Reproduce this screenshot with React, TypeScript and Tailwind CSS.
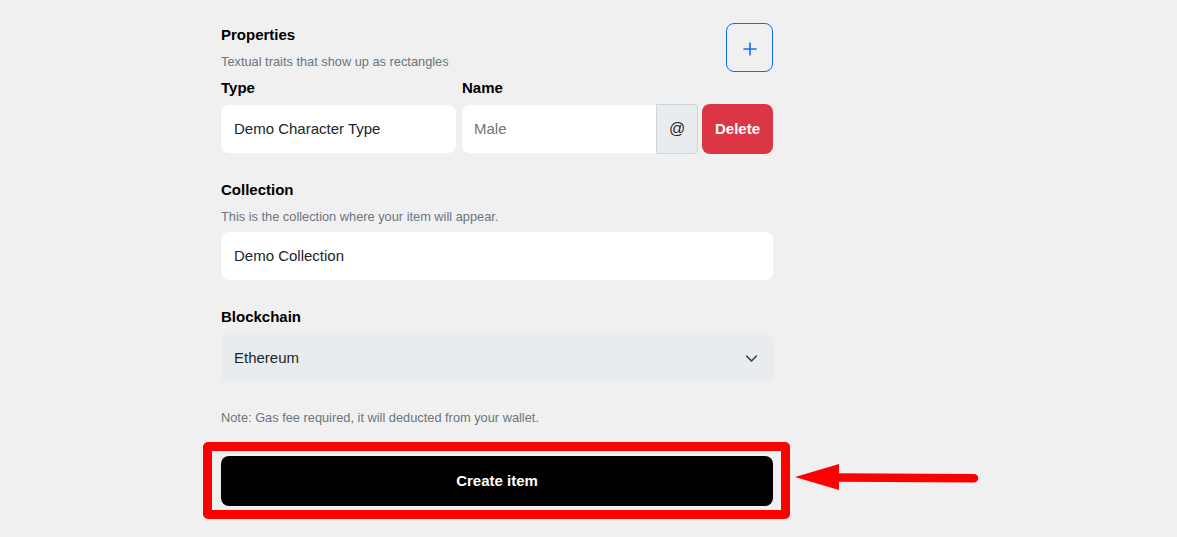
import React from "react";

export default function App() {
  return (
    <div className="min-h-screen bg-[#f0f0f0] font-['Liberation_Sans',Arial,sans-serif] text-black">
      <div className="ml-[221px] w-[552px] pt-[23px]">
        {/* Properties header */}
        <div className="flex items-start justify-between">
          <div className="pt-[3px]">
            <h3 className="text-[15px] font-bold leading-[18px]">Properties</h3>
            <p className="mt-[8px] text-[12.8px] leading-[19.2px] text-[#6c757d]">
              Textual traits that show up as rectangles
            </p>
          </div>
          <button className="flex h-[49px] w-[47px] items-center justify-center rounded-[8px] border border-[#0d6efd] text-[#0d6efd]">
            <svg width="16" height="16" viewBox="0 0 16 16" fill="none" className="mt-[2px]">
              <path d="M8 1.5v13M1.5 8h13" stroke="currentColor" strokeWidth="1.6" />
            </svg>
          </button>
        </div>

        {/* Type / Name row */}
        <div className="mt-[7px] flex items-end">
          <div className="w-[235px]">
            <label className="block text-[15px] font-bold leading-[18px]">Type</label>
            <div className="mt-[7px] flex h-[50px] items-center">
              <div className="flex h-[48px] w-full items-center rounded-[8px] bg-white px-[13px] text-[15px] text-[#212529]">
                Demo Character Type
              </div>
            </div>
          </div>
          <div className="ml-[6px] w-[236px]">
            <label className="block text-[15px] font-bold leading-[18px]">Name</label>
            <div className="mt-[7px] flex h-[50px] items-center">
              <div className="flex h-[48px] flex-1 items-center rounded-l-[8px] bg-white px-[12px] text-[15px] text-[#6c757d]">
                Male
              </div>
              <div className="flex h-[50px] w-[42px] items-center justify-center rounded-r-[4px] border border-[#ced4da] bg-[#e9ecef] text-[16px] text-[#212529]">
                @
              </div>
            </div>
          </div>
          <button className="ml-[4px] h-[50px] w-[71px] rounded-[8px] bg-[#dc3545] text-[15px] font-bold text-white">
            Delete
          </button>
        </div>

        {/* Collection */}
        <label className="mt-[27px] block text-[15px] font-bold leading-[18px]">Collection</label>
        <p className="mt-[8px] text-[12.8px] leading-[19.2px] text-[#6c757d]">
          This is the collection where your item will appear.
        </p>
        <div className="mt-[6px] flex h-[48px] items-center rounded-[8px] bg-white px-[13px] text-[15px] text-[#212529]">
          Demo Collection
        </div>

        {/* Blockchain */}
        <label className="mt-[28px] block text-[15px] font-bold leading-[18px]">Blockchain</label>
        <div className="mt-[7px] flex h-[50px] items-center justify-between rounded-[8px] bg-[#e9ecef] pl-[13px] pr-[15px] text-[15px] text-[#212529]">
          <span>Ethereum</span>
          <svg width="13" height="13" viewBox="0 0 16 16" fill="none" className="mt-[1px]">
            <path d="M2 5l6 6 6-6" stroke="#343a40" strokeWidth="1.9" strokeLinecap="round" strokeLinejoin="round" />
          </svg>
        </div>

        <p className="mt-[25px] text-[12.8px] leading-[19.2px] text-[#6c757d]">
          Note: Gas fee required, it will deducted from your wallet.
        </p>

        {/* Create button with annotation */}
        <div className="relative mt-[29px]">
          <button className="h-[50px] w-full rounded-[8px] bg-black text-[15px] font-bold text-white">
            Create item
          </button>
          <div className="pointer-events-none absolute -bottom-[13px] -left-[18px] -right-[17px] -top-[14px] rounded-[5px] border-[9px] border-[#ff0000]" />
          <svg
            className="pointer-events-none absolute left-[572px] top-0"
            width="190"
            height="50"
            viewBox="0 0 190 50"
            fill="none"
          >
            <path d="M2 21L46 8L46 34Z" fill="#ff0000" />
            <path d="M44 21.5L181 22.2" stroke="#ff0000" strokeWidth="8.5" strokeLinecap="round" />
          </svg>
        </div>
      </div>
    </div>
  );
}
